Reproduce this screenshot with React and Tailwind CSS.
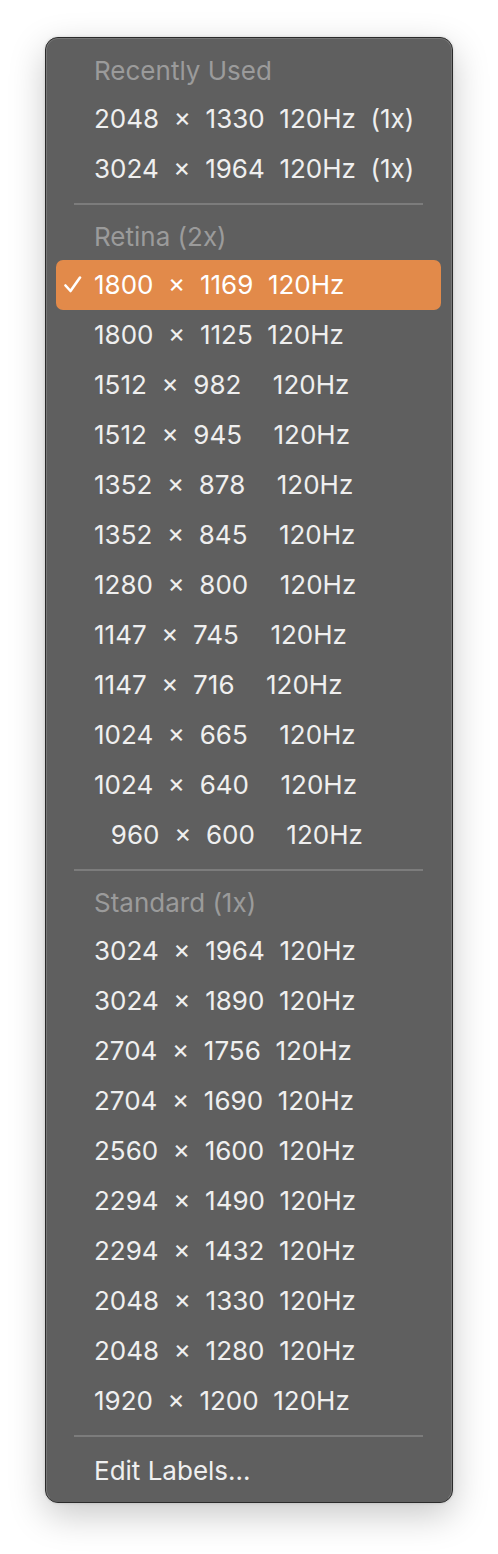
import React from "react";

const F = "\u2007";
const S = "  ";

const recent = [
  `2048${S}×${S}1330${S}120Hz${S}(1x)`,
  `3024${S}×${S}1964${S}120Hz${S}(1x)`,
];

const retina = [
  ["1800", "1169"],
  ["1800", "1125"],
  ["1512", "982"],
  ["1512", "945"],
  ["1352", "878"],
  ["1352", "845"],
  ["1280", "800"],
  ["1147", "745"],
  ["1147", "716"],
  ["1024", "665"],
  ["1024", "640"],
  ["960", "600"],
];

const standard = [
  ["3024", "1964"],
  ["3024", "1890"],
  ["2704", "1756"],
  ["2704", "1690"],
  ["2560", "1600"],
  ["2294", "1490"],
  ["2294", "1432"],
  ["2048", "1330"],
  ["2048", "1280"],
  ["1920", "1200"],
];

function fmt([w, h]) {
  const pw = w.length < 4 ? F + w : w;
  const ph = h.length < 4 ? h + F : h;
  return `${pw}${S}×${S}${ph}${S}120Hz`;
}

function Header({ children }) {
  return (
    <div className="h-[46px] flex items-center pl-[47px] text-[#9b9b9b]">
      {children}
    </div>
  );
}

function Item({ children, selected }) {
  if (selected) {
    return (
      <div className="h-[50px] mx-[9px] mr-[10px] rounded-[7px] bg-[#e28a4a] flex items-center relative text-white">
        <svg
          className="absolute left-[8px] top-[16px]"
          width="18"
          height="17"
          viewBox="0 0 18 17"
          fill="none"
        >
          <path
            d="M1.5 9.5 L6.5 15 L16 1.5"
            stroke="white"
            strokeWidth="2.6"
            strokeLinecap="round"
            strokeLinejoin="round"
          />
        </svg>
        <span className="pl-[38px] whitespace-pre">{children}</span>
      </div>
    );
  }
  return (
    <div className="h-[50px] flex items-center pl-[47px] whitespace-pre text-[#efefef]">
      {children}
    </div>
  );
}

function Sep() {
  return (
    <div className="h-[20px] flex items-center pl-[27px] pr-[28px]">
      <div className="h-[2px] w-full bg-[#7c7c7c]" />
    </div>
  );
}

export default function App() {
  return (
    <div
      className="w-[498px] h-[1554px] bg-white pt-[37px] pl-[45px]"
      style={{ fontFamily: "Inter, 'Noto Sans', sans-serif" }}
    >
      <div className="w-[408px] rounded-[13px] border border-[#2b2b2b] bg-[#5f5f5f] shadow-[0_12px_36px_rgba(0,0,0,0.22),0_0_3px_rgba(0,0,0,0.15)] text-[26px] leading-none overflow-hidden">
        <div className="rounded-[12px] border border-[#767676] border-b-[#5f5f5f] pt-[9px] pb-[5px]">
          <Header>Recently Used</Header>
          {recent.map((r) => (
            <Item key={r}>{r}</Item>
          ))}
          <Sep />
          <Header>Retina (2x)</Header>
          {retina.map((r, i) => (
            <Item key={r.join("x")} selected={i === 0}>
              {fmt(r)}
            </Item>
          ))}
          <Sep />
          <Header>Standard (1x)</Header>
          {standard.map((r) => (
            <Item key={r.join("x")}>{fmt(r)}</Item>
          ))}
          <Sep />
          <Item>Edit Labels...</Item>
        </div>
      </div>
    </div>
  );
}
